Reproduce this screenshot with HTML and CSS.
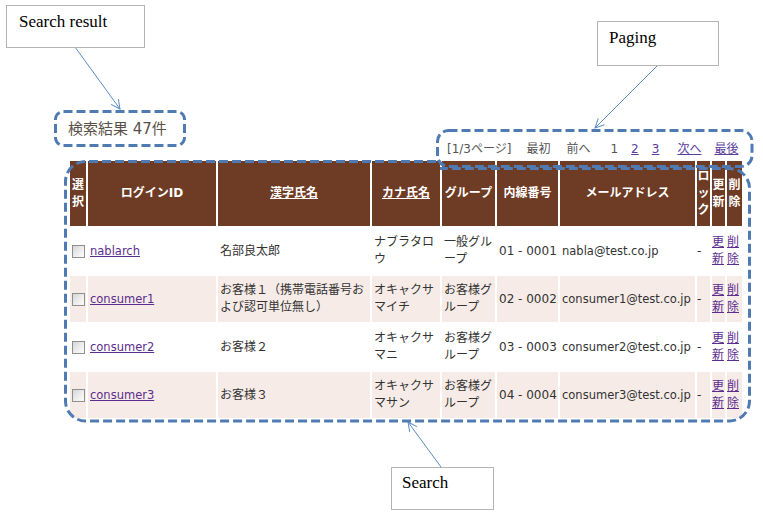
FILE: index.html
```html
<!DOCTYPE html>
<html lang="ja">
<head>
<meta charset="utf-8">
<title>検索結果</title>
<link rel="stylesheet" href="styles.css">
</head>
<body>
<div class="page">
  <div class="result-title">検索結果 47件</div>
  <div class="paging">
    <span class="pg p1">[1/3ページ]</span>
    <span class="pg p2">最初</span>
    <span class="pg p3">前へ</span>
    <span class="pg p4">1</span>
    <a class="pg p5" href="#">2</a>
    <a class="pg p6" href="#">3</a>
    <a class="pg p7" href="#">次へ</a>
    <a class="pg p8" href="#">最後</a>
  </div>
  <table class="list">
    <colgroup>
      <col class="c-sel"><col class="c-id"><col class="c-kanji"><col class="c-kana"><col class="c-group">
      <col class="c-ext"><col class="c-mail"><col class="c-lock"><col class="c-upd"><col class="c-del">
    </colgroup>
    <thead>
      <tr>
        <th class="wrap">選択</th>
        <th>ログインID</th>
        <th><a class="sort" href="#">漢字氏名</a></th>
        <th><a class="sort" href="#">カナ氏名</a></th>
        <th>グループ</th>
        <th>内線番号</th>
        <th>メールアドレス</th>
        <th class="wrap">ロック</th>
        <th class="wrap">更新</th>
        <th class="wrap">削除</th>
      </tr>
    </thead>
    <tbody>
      <tr>
        <td class="sel"><input class="cb" type="checkbox"></td>
        <td><a class="lnk id" href="#">nablarch</a></td>
        <td class="wrap">名部良太郎</td>
        <td class="wrap">ナブラタロウ</td>
        <td class="wrap">一般グループ</td>
        <td class="nw">01 - 0001</td>
        <td class="nw mail">nabla@test.co.jp</td>
        <td class="narrow">-</td>
        <td class="narrow wrap"><a class="lnk" href="#">更新</a></td>
        <td class="narrow wrap"><a class="lnk" href="#">削除</a></td>
      </tr>
      <tr class="tint">
        <td class="sel"><input class="cb" type="checkbox"></td>
        <td><a class="lnk id" href="#">consumer1</a></td>
        <td class="wrap">お客様１（携帯電話番号および認可単位無し）</td>
        <td class="wrap">オキャクサマイチ</td>
        <td class="wrap">お客様グループ</td>
        <td class="nw">02 - 0002</td>
        <td class="nw mail">consumer1@test.co.jp</td>
        <td class="narrow">-</td>
        <td class="narrow wrap"><a class="lnk" href="#">更新</a></td>
        <td class="narrow wrap"><a class="lnk" href="#">削除</a></td>
      </tr>
      <tr>
        <td class="sel"><input class="cb" type="checkbox"></td>
        <td><a class="lnk id" href="#">consumer2</a></td>
        <td class="wrap">お客様２</td>
        <td class="wrap">オキャクサマニ</td>
        <td class="wrap">お客様グループ</td>
        <td class="nw">03 - 0003</td>
        <td class="nw mail">consumer2@test.co.jp</td>
        <td class="narrow">-</td>
        <td class="narrow wrap"><a class="lnk" href="#">更新</a></td>
        <td class="narrow wrap"><a class="lnk" href="#">削除</a></td>
      </tr>
      <tr class="tint">
        <td class="sel"><input class="cb" type="checkbox"></td>
        <td><a class="lnk id" href="#">consumer3</a></td>
        <td class="wrap">お客様３</td>
        <td class="wrap">オキャクサマサン</td>
        <td class="wrap">お客様グループ</td>
        <td class="nw">04 - 0004</td>
        <td class="nw mail">consumer3@test.co.jp</td>
        <td class="narrow">-</td>
        <td class="narrow wrap"><a class="lnk" href="#">更新</a></td>
        <td class="narrow wrap"><a class="lnk" href="#">削除</a></td>
      </tr>
    </tbody>
  </table>
</div>

<div class="annot">
  <svg class="annot-svg" width="763" height="516" viewBox="0 0 763 516">
    <defs>
      <marker id="ah" markerWidth="12" markerHeight="12" refX="10" refY="6" orient="auto" markerUnits="userSpaceOnUse">
        <path d="M1,1.5 L10,6 L1,10.5" fill="none" stroke="#5b8bc6" stroke-width="1"/>
      </marker>
    </defs>
    <g fill="none" stroke="#4f7ab2" stroke-width="3" stroke-dasharray="9 4">
      <rect x="55.5" y="111.5" width="129" height="34" rx="8"/>
      <rect x="437.5" y="130.5" width="314.5" height="36" rx="11"/>
      <path d="M436 161.5 H86 A20 20 0 0 0 65.5 182 V401 A20 20 0 0 0 86 421 H729 A20 20 0 0 0 749.5 401 V189 A20 20 0 0 0 729 168.5 H440"/>
    </g>
    <g stroke="#5b8bc6" stroke-width="1">
      <line x1="75" y1="47" x2="120" y2="109" marker-end="url(#ah)"/>
      <line x1="658" y1="65" x2="595" y2="128" marker-end="url(#ah)"/>
      <line x1="441" y1="467" x2="408" y2="422" marker-end="url(#ah)"/>
    </g>
  </svg>
  <div class="callout note-result">Search result</div>
  <div class="callout note-paging">Paging</div>
  <div class="callout note-search">Search</div>
</div>
</body>
</html>
```

FILE: styles.css
```css
html, body {
  margin: 0;
  padding: 0;
  background: #ffffff;
}

body {
  font-family: "DejaVu Sans", "Noto Sans CJK JP", sans-serif;
  color: #333333;
  position: relative;
  width: 763px;
  height: 516px;
  overflow: hidden;
}

.page {
  padding: 118px 0 0 68px;
}

.result-title {
  font-size: 15px;
  line-height: 22px;
  height: 22px;
  color: #5a5048;
}

.paging {
  display: flex;
  align-items: baseline;
  font-size: 12px;
  line-height: 18px;
  height: 18px;
  padding-left: 379px;
  color: #555555;
}

.pg {
  white-space: nowrap;
}

.p2 { margin-left: 15px; }
.p3 { margin-left: 16px; }
.p4 { margin-left: 20px; }
.p5 { margin-left: 13px; }
.p6 { margin-left: 13px; }
.p7 { margin-left: 18px; }
.p8 { margin-left: 13px; }

.paging a {
  color: #5a3d9c;
  text-decoration: underline;
}

table.list {
  margin-top: 1px;
  border-collapse: separate;
  border-spacing: 2px;
  table-layout: fixed;
  width: 676px;
  font-size: 12px;
}

.c-sel { width: 16px; }
.c-id { width: 128px; }
.c-kanji { width: 152px; }
.c-kana { width: 68px; }
.c-group { width: 53px; }
.c-ext { width: 61px; }
.c-mail { width: 135px; }
.c-lock { width: 13px; }
.c-upd { width: 13px; }
.c-del { width: 15px; }

th {
  background: #6e3b24;
  color: #ffffff;
  font-weight: bold;
  font-size: 12px;
  line-height: 17px;
  height: 65px;
  padding: 0;
  text-align: center;
  vertical-align: middle;
  white-space: nowrap;
}

th.wrap {
  white-space: normal;
  line-break: anywhere;
}

th a.sort {
  color: #ffffff;
  text-decoration: underline;
}

td {
  line-height: 17px;
  height: 46px;
  padding: 0 1px 0 2px;
  vertical-align: middle;
  text-align: left;
  color: #333333;
  overflow: visible;
}

td.wrap {
  line-break: anywhere;
}

td.nw {
  white-space: nowrap;
}

td.mail {
  font-size: 11.5px;
}

td.narrow {
  padding: 0;
}

td.sel {
  padding: 0;
}

tr.tint td {
  background: #f6ebe6;
}

a.lnk {
  color: #5b2d8e;
  text-decoration: underline;
}

a.lnk.id {
  font-size: 11.5px;
}

.cb {
  appearance: none;
  -webkit-appearance: none;
  display: block;
  box-sizing: border-box;
  width: 13px;
  height: 13px;
  margin: 0 0 0 2px;
  border: 1px solid #8f8f8f;
  border-radius: 0;
  background: linear-gradient(135deg, #d6d6d6 0%, #efefef 60%, #fbfbfb 100%);
}

/* annotation layer drawn over the page */
.annot {
  position: absolute;
  left: 0;
  top: 0;
  width: 763px;
  height: 516px;
  pointer-events: none;
}

.annot-svg {
  position: absolute;
  left: 0;
  top: 0;
}

.callout {
  position: absolute;
  box-sizing: border-box;
  border: 1px solid #b4b4b4;
  background: #ffffff;
  font-family: "Liberation Serif", serif;
  font-size: 17px;
  line-height: 19px;
  color: #000000;
  white-space: nowrap;
}

.note-result {
  left: 6px;
  top: 5px;
  width: 139px;
  height: 43px;
  padding: 6px 0 0 12px;
}

.note-paging {
  left: 597px;
  top: 21px;
  width: 122px;
  height: 45px;
  padding: 6px 0 0 11px;
}

.note-search {
  left: 391px;
  top: 467px;
  width: 103px;
  height: 43px;
  padding: 5px 0 0 10px;
}
```
